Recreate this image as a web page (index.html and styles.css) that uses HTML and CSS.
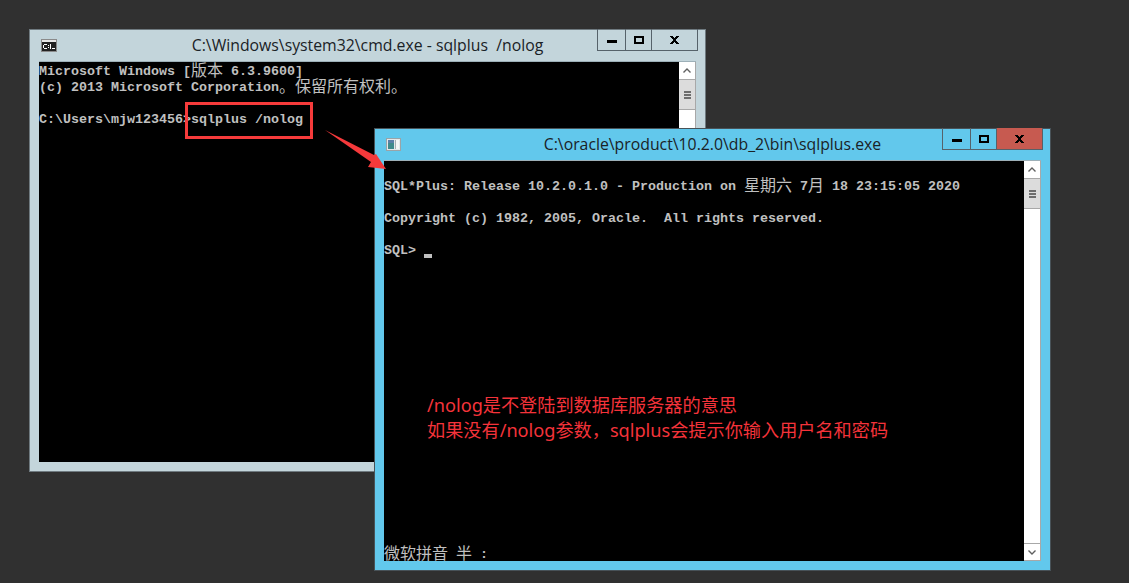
FILE: index.html
```html
<!DOCTYPE html>
<html lang="zh-CN">
<head>
<meta charset="utf-8">
<title>sqlplus /nolog</title>
<link rel="stylesheet" href="styles.css">
</head>
<body>
<section class="window window-cmd">
  <header class="titlebar">
    <svg class="app-icon" width="16" height="13" viewBox="0 0 16 13"><rect x="0.5" y="0.5" width="15" height="12" fill="#222" stroke="#8a8a8a"/><rect x="1" y="1" width="14" height="2" fill="#e6e6e6"/><rect x="3" y="5" width="3" height="1" fill="#fff"/><rect x="2" y="6" width="1" height="3" fill="#fff"/><rect x="3" y="9" width="3" height="1" fill="#fff"/><rect x="7" y="6" width="1" height="1" fill="#fff"/><rect x="7" y="8" width="1" height="1" fill="#fff"/><rect x="9" y="5" width="1" height="5" fill="#fff"/><rect x="11" y="9" width="3" height="1" fill="#fff"/></svg>
    <h1 class="title">C:\Windows\system32\cmd.exe - sqlplus  /nolog</h1>
    <div class="controls">
      <span class="control ctl-min"><svg width="10" height="3" viewBox="0 0 10 3"><rect width="10" height="3" fill="#000"/></svg></span>
      <span class="control ctl-max"><svg width="10" height="8" viewBox="0 0 10 8"><path d="M0 0h10v8H0zM2 2v4h6V2z" fill="#000" fill-rule="evenodd"/></svg></span>
      <span class="control ctl-close"><svg width="9" height="8" viewBox="0 0 9 8"><path d="M0 0h3v1h1v1h1V1h1V0h3v1H8v1H7v1H6v2h1v1h1v1h1v1H6V7H5V6H4v1H3v1H0V7h1V6h1V5h1V3H2V2H1V1H0z" fill="#000"/></svg></span>
    </div>
  </header>
  <div class="client">
    <pre class="console">Microsoft Windows [<span class="cjk">版本</span> 6.3.9600]
(c) 2013 Microsoft Corporation<span class="cjk">。保留所有权利。</span>

C:\Users\mjw123456&gt;sqlplus /nolog</pre>
    <div class="scrollbar">
      <span class="sb-btn"><svg width="8" height="5" viewBox="0 0 8 5"><path d="M0.5 4.5 4 1l3.5 3.5" fill="none" stroke="#606060" stroke-width="1.4"/></svg></span>
      <span class="sb-thumb"><i></i><i></i><i></i></span>
      <span class="sb-track"></span>
      <span class="sb-btn sb-btn-down"><svg width="8" height="5" viewBox="0 0 8 5"><path d="M0.5 .5 4 4l3.5-3.5" fill="none" stroke="#606060" stroke-width="1.4"/></svg></span>
    </div>
  </div>
</section>

<section class="window window-sql">
  <header class="titlebar">
    <svg class="app-icon" width="15" height="13" viewBox="0 0 15 13"><rect x="0.5" y="0.5" width="14" height="12" fill="#e4e8ea" stroke="#9aa4a8"/><rect x="2" y="2" width="6" height="9" fill="#3f8a8c"/><rect x="2" y="2" width="6" height="3" fill="#5a7fa8"/><rect x="9" y="2" width="4" height="9" fill="#f4f6f6"/><rect x="9" y="2" width="1" height="9" fill="#a8b0b4"/></svg>
    <h1 class="title">C:\oracle\product\10.2.0\db_2\bin\sqlplus.exe</h1>
    <div class="controls">
      <span class="control ctl-min"><svg width="10" height="3" viewBox="0 0 10 3"><rect width="10" height="3" fill="#000"/></svg></span>
      <span class="control ctl-max"><svg width="10" height="8" viewBox="0 0 10 8"><path d="M0 0h10v8H0zM2 2v4h6V2z" fill="#000" fill-rule="evenodd"/></svg></span>
      <span class="control ctl-close ctl-close-red"><svg width="9" height="8" viewBox="0 0 9 8"><path d="M0 0h3v1h1v1h1V1h1V0h3v1H8v1H7v1H6v2h1v1h1v1h1v1H6V7H5V6H4v1H3v1H0V7h1V6h1V5h1V3H2V2H1V1H0z" fill="#000"/></svg></span>
    </div>
  </header>
  <div class="client">
    <pre class="console">

SQL*Plus: Release 10.2.0.1.0 - Production on <span class="cjk">星期六</span> 7<span class="cjk">月</span> 18 23:15:05 2020

Copyright (c) 1982, 2005, Oracle.  All rights reserved.

SQL&gt; <span class="cursor"></span>


















<span class="cjk">微软拼音</span> <span class="cjk">半</span> :</pre>
    <div class="scrollbar">
      <span class="sb-btn"><svg width="8" height="5" viewBox="0 0 8 5"><path d="M0.5 4.5 4 1l3.5 3.5" fill="none" stroke="#606060" stroke-width="1.4"/></svg></span>
      <span class="sb-thumb"><i></i><i></i><i></i></span>
      <span class="sb-track"></span>
      <span class="sb-btn sb-btn-down"><svg width="8" height="5" viewBox="0 0 8 5"><path d="M0.5 .5 4 4l3.5-3.5" fill="none" stroke="#606060" stroke-width="1.4"/></svg></span>
    </div>
  </div>
  <div class="note">
    <p>/nolog是不登陆到数据库服务器的意思</p>
    <p>如果没有/nolog参数，sqlplus会提示你输入用户名和密码</p>
  </div>
</section>

<div class="highlight-box"></div>
<svg class="arrow" width="70" height="46" viewBox="0 0 70 46"><polygon points="1,1 50,26 52,25 62,40 44,38 47,33" fill="#f5393b"/></svg>
</body>
</html>
```
FILE: styles.css
```css
* { box-sizing: border-box; }

html, body {
  margin: 0;
  width: 1129px;
  height: 583px;
  overflow: hidden;
  background: #303030;
}

.window {
  position: absolute;
  width: 677px;
  height: 443px;
  display: flex;
  flex-direction: column;
  border: 1px solid #6f7a80;
  padding: 0 9px 9px 9px;
}

.window-cmd {
  left: 29px;
  top: 29px;
  background: #c3d5db;
}

.window-sql {
  left: 374px;
  top: 128px;
  background: #62c8ec;
  border-color: #485258;
}

.titlebar {
  position: relative;
  height: 31px;
  flex: none;
  display: flex;
  align-items: center;
}

.app-icon {
  position: relative;
  left: 2px;
  flex: none;
}

.title {
  position: absolute;
  left: 0;
  right: 0;
  top: 5px;
  margin: 0;
  text-align: center;
  white-space: pre;
  font: 400 15.8px/20px "Open Sans", "Noto Sans", sans-serif;
  color: #1a2226;
}

.controls {
  position: absolute;
  top: -1px;
  right: -2px;
  height: 22px;
  display: flex;
  border: 1px solid #56626a;
  border-top: 0;
}

.control {
  display: flex;
  align-items: center;
  justify-content: center;
  border-left: 1px solid #56626a;
  width: 26px;
}

.control:first-child { border-left: 0; width: 27px; }
.ctl-close { width: 46px; }
.ctl-close-red { background: #c75a50; }
.ctl-min svg { position: relative; top: 2px; }

.client {
  flex: none;
  height: 401px;
  display: flex;
  border-top: 1px solid #9db0b8;
  background: #000;
}

.console {
  flex: none;
  width: 640px;
  height: 400px;
  margin: 0;
  padding-top: 2px;
  overflow: hidden;
  background: #000;
  color: #c0c0c0;
  font: 700 13.34px/16px "Liberation Mono", "Noto Sans CJK SC", monospace;
  white-space: pre;
}

.cjk {
  font: 400 16px/0 "Noto Sans CJK SC", sans-serif;
  vertical-align: -1px;
}

.cursor {
  display: inline-block;
  width: 8px;
  height: 4px;
  margin-bottom: -4px;
  background: #c0c0c0;
}

.scrollbar {
  flex: none;
  width: 17px;
  display: flex;
  flex-direction: column;
  background: #fff;
  border-right: 1px solid #a8a8a8;
  border-bottom: 1px solid #a8a8a8;
}

.sb-btn {
  flex: none;
  height: 17px;
  display: flex;
  align-items: center;
  justify-content: center;
  background: #fff;
}

.sb-btn-down { border-top: 1px solid #a8a8a8; }

.sb-thumb {
  flex: none;
  height: 31px;
  display: flex;
  flex-direction: column;
  align-items: center;
  justify-content: center;
  gap: 1px;
  background: #dcdcdc;
  border-top: 1px solid #a8a8a8;
  border-bottom: 1px solid #a8a8a8;
}

.sb-thumb i {
  display: block;
  width: 7px;
  height: 2px;
  background: #6e6e6e;
}

.sb-track { flex: 1; }

.note {
  position: absolute;
  left: 52px;
  top: 264px;
  color: #f4333a;
  font: 400 18.16px/25px "Noto Sans", "Noto Sans CJK SC", sans-serif;
}

.note p { margin: 0; white-space: nowrap; }

.highlight-box {
  position: absolute;
  left: 185px;
  top: 102px;
  width: 128px;
  height: 37px;
  border: 3px solid #f63b3b;
}

.arrow {
  position: absolute;
  left: 324px;
  top: 129px;
}
```
